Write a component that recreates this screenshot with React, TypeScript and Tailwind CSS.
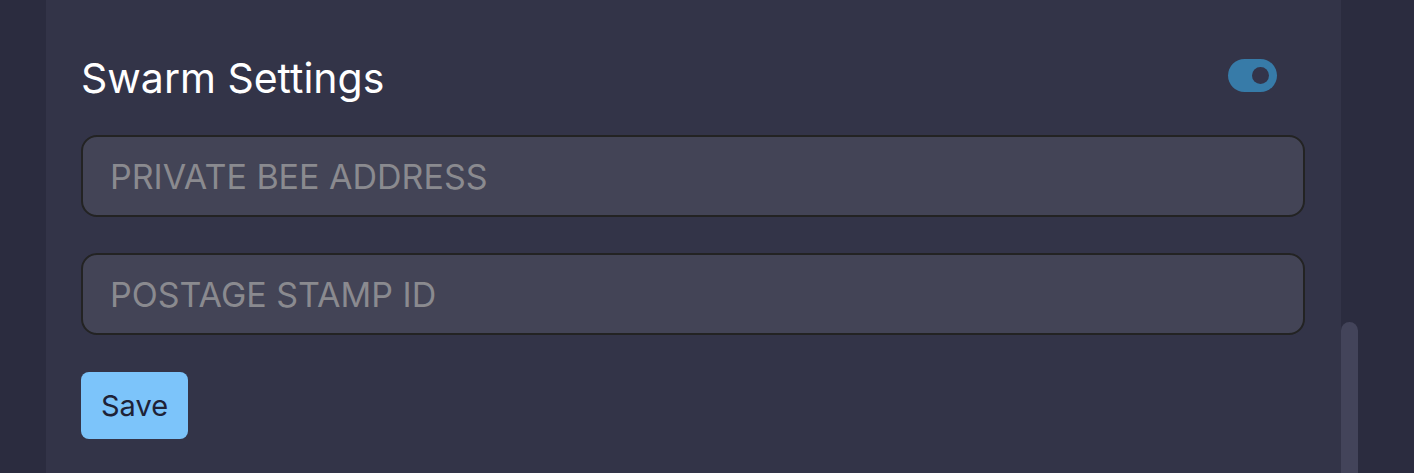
import { useState } from 'react'

export default function App() {
  const [enabled, setEnabled] = useState(true)
  const [address, setAddress] = useState('')
  const [stamp, setStamp] = useState('')

  return (
    <div className="flex h-[473px] w-full overflow-hidden bg-[#2b2c3f] font-['Inter',sans-serif]">
      {/* left gutter */}
      <div className="w-[46px] shrink-0 bg-[#2b2c3f]" />

      {/* settings panel */}
      <div className="w-[1295px] shrink-0 bg-[#333448] pl-[35px] pr-[36px]">
        <div className="flex items-start justify-between pt-[54px]">
          <h2 className="text-[41px] leading-[48px] text-white">Swarm Settings</h2>
          <button
            type="button"
            onClick={() => setEnabled(!enabled)}
            className={`mr-[28px] mt-[5px] flex h-[33px] w-[49px] items-center rounded-full px-[8px] ${
              enabled ? 'justify-end bg-[#377ba8]' : 'justify-start bg-[#55566a]'
            }`}
          >
            <span className="h-[17px] w-[17px] rounded-full bg-[#33344a]" />
          </button>
        </div>

        <div className="mt-[33px] flex flex-col gap-[36px]">
          <input
            value={address}
            onChange={(e) => setAddress(e.target.value)}
            placeholder="PRIVATE BEE ADDRESS"
            className="h-[82px] w-full rounded-[16px] border-2 border-[#232323] bg-[#434456] pl-[27px] text-[34px] text-white placeholder:text-[#8a8a8f] focus:outline-none"
          />
          <input
            value={stamp}
            onChange={(e) => setStamp(e.target.value)}
            placeholder="POSTAGE STAMP ID"
            className="h-[82px] w-full rounded-[16px] border-2 border-[#232323] bg-[#434456] pl-[27px] text-[34px] text-white placeholder:text-[#8a8a8f] focus:outline-none"
          />
        </div>

        <button
          type="button"
          className="mt-[37px] h-[67px] rounded-[8px] bg-[#7cc4fa] px-[20px] text-[29px] text-[#1e2236]"
        >
          Save
        </button>
      </div>

      {/* scrollbar track */}
      <div className="flex-1 bg-[#2b2c3f]">
        <div className="mt-[322px] h-[200px] w-[17px] rounded-t-full bg-[#43445a]" />
      </div>
    </div>
  )
}
